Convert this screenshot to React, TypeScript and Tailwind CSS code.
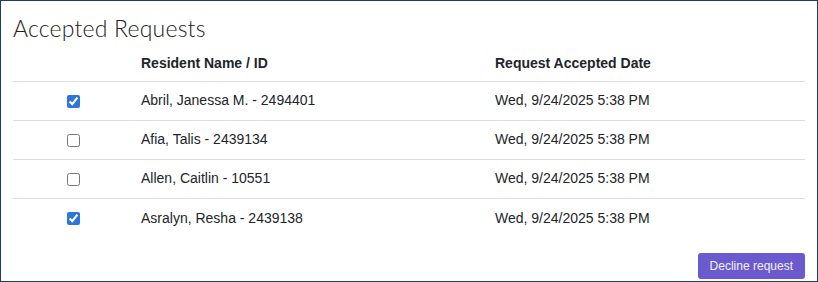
import React from "react";

const rows = [
  { name: "Abril, Janessa M. - 2494401", date: "Wed, 9/24/2025 5:38 PM", checked: true },
  { name: "Afia, Talis - 2439134", date: "Wed, 9/24/2025 5:38 PM", checked: false },
  { name: "Allen, Caitlin - 10551", date: "Wed, 9/24/2025 5:38 PM", checked: false },
  { name: "Asralyn, Resha - 2439138", date: "Wed, 9/24/2025 5:38 PM", checked: true },
];

export default function App() {
  return (
    <div className="w-[818px] h-[282px] border border-[#1f3a6b] bg-white flex flex-col px-[12px] text-[#212529] [font-family:'Liberation_Sans',Arial,sans-serif] box-border">
      <h1 className="pt-[13px] h-[45px] text-[23px] leading-[28px] font-light tracking-[0.2px] text-[#222] [font-family:Lato,'Open_Sans',sans-serif]">
        Accepted Requests
      </h1>
      <div className="flex h-[36px] items-center border-b border-[#dddddd] text-[14px] font-bold">
        <div className="w-[120px]" />
        <div className="w-[354px] pl-[8px]">Resident Name / ID</div>
        <div className="flex-1 pl-[8px]">Request Accepted Date</div>
      </div>
      {rows.map((r, i) => (
        <div
          key={i}
          className={`flex h-[39px] items-center text-[14px] ${i < rows.length - 1 ? "border-b border-[#dddddd]" : ""}`}
        >
          <div className="w-[120px] flex justify-center">
            <input
              type="checkbox"
              defaultChecked={r.checked}
              className="w-[13px] h-[13px] m-0 accent-[#2f74d8]"
            />
          </div>
          <div className="w-[354px] pl-[8px] pb-[1px]">{r.name}</div>
          <div className="flex-1 pl-[8px] pb-[1px]">{r.date}</div>
        </div>
      ))}
      <div className="flex justify-end mt-[15px]">
        <button className="h-[26px] px-[12px] rounded-[3px] bg-[#6a5acd] text-[#f4f2ff] text-[12px] leading-none">
          Decline request
        </button>
      </div>
    </div>
  );
}
